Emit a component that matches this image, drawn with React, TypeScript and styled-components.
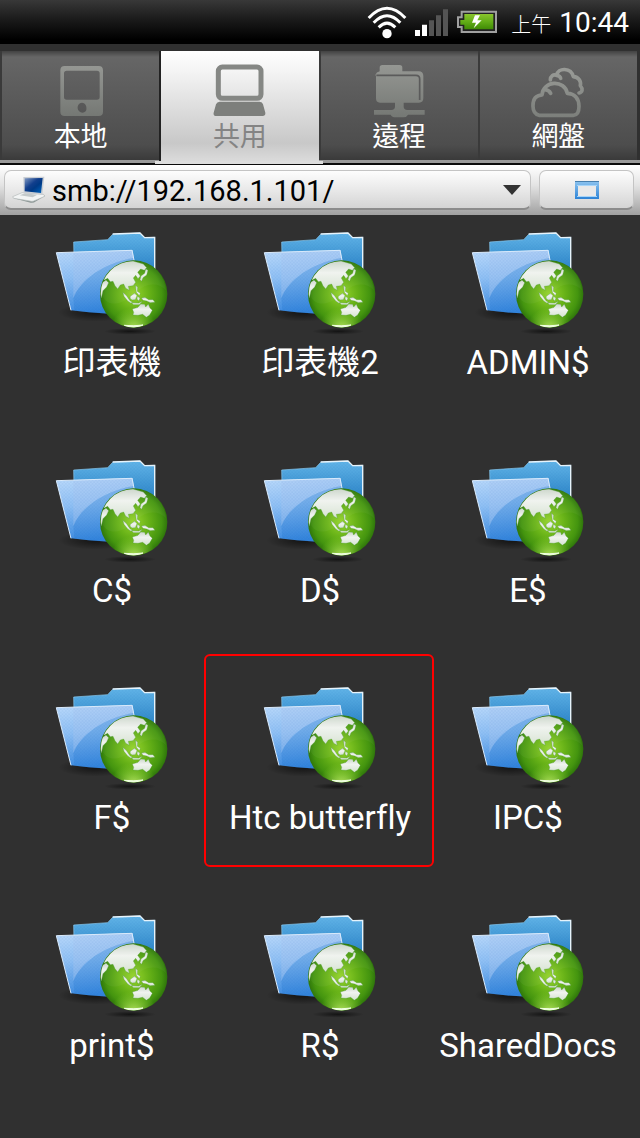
import React from "react";
import styled, { createGlobalStyle, css } from "styled-components";

const sans = `Roboto, "Noto Sans CJK TC", sans-serif`;

const GlobalStyle = createGlobalStyle`
  *, *::before, *::after { box-sizing: border-box; }
  body { margin: 0; background: #303030; font-family: ${sans}; font-variant-ligatures: none; }
  button, input { font: inherit; font-variant-ligatures: none; color: inherit; border: 0; padding: 0; margin: 0; background: none; }
  svg { display: block; flex: none; }
`;

const Screen = styled.div`
  display: flex;
  flex-direction: column;
  min-height: 100vh;
  background: #303030;
`;

const StatusBar = styled.header`
  display: flex;
  align-items: center;
  justify-content: flex-end;
  height: 44px;
  padding-right: 11px;
  color: #fff;
  background: linear-gradient(#383838, #1a1a1a 45%, #000 90%);
`;

const Clock = styled.time`
  display: flex;
  align-items: baseline;
  gap: 8px;
  margin-left: 14px;
  padding-top: 4px;
  font-size: 28px;
  line-height: 40px;
`;

const Meridiem = styled.span`
  font-size: 20px;
  font-weight: 300;
`;

const TabBar = styled.nav`
  display: flex;
  height: 121px;
  padding: 7px 3px 1px 0;
  background: linear-gradient(#303030 0 116px, #999 116px 119px, #0a0a0a 119px);
`;

const Tab = styled.button<{ $active: boolean }>`
  position: relative;
  flex: 1;
  display: flex;
  flex-direction: column;
  align-items: center;
  height: 109px;
  padding-top: 13px;
  border-left: 2px solid #3a3a3a;
  color: #fff;
  background: linear-gradient(#424242, #666 6px, #4d4d4d 94px, #3a3a3a);
  ${(p) =>
    p.$active &&
    css`
      height: 112px;
      color: #848484;
      background: linear-gradient(#fff, #f4f4f4 20px, #c8c8c8 92px, #ddd);
      border-left-color: #222;
      &::after {
        content: "";
        position: absolute;
        left: -6px;
        right: -4px;
        bottom: -1px;
        height: 3px;
        background: #ddd;
      }
    `}
`;

const TabLabel = styled.span`
  margin-top: 3px;
  font-size: 27px;
  line-height: 32px;
`;

const AddressBar = styled.form`
  display: flex;
  gap: 8px;
  padding: 5px 6px 5px 4px;
  background: linear-gradient(#fff, #e4e4e4 40%, #a0a0a0);
`;

const raised = css`
  height: 40px;
  border: 1px solid #c4c4c4;
  border-bottom: 2px solid #8c8c8c;
  border-radius: 7px;
  background: linear-gradient(#fdfdfd, #e9e9e9 50%, #d4d4d4);
`;

const AddressField = styled.div`
  ${raised}
  flex: 1;
  min-width: 0;
  display: flex;
  align-items: center;
  padding: 0 8px 0 7px;
  gap: 6px;
`;

const AddressInput = styled.input`
  flex: 1;
  min-width: 0;
  height: 36px;
  padding-top: 2px;
  font-size: 29px;
  color: #000;
  outline: none;
`;

const IconButton = styled.button`
  display: flex;
  align-items: center;
  justify-content: center;
`;

const WindowButton = styled(IconButton)`
  ${raised}
  flex: 0 0 95px;
`;

const FileGrid = styled.main`
  flex: 1;
  display: grid;
  grid-template-columns: repeat(3, 1fr);
  grid-auto-rows: 1fr;
  padding: 0 8px 13px;
`;

const FileItem = styled.button<{ $marked: boolean }>`
  position: relative;
  display: flex;
  flex-direction: column;
  align-items: center;
  min-height: 200px;
  padding-top: 13px;
  color: #fff;
  ${(p) =>
    p.$marked &&
    css`
      &::after {
        content: "";
        position: absolute;
        inset: -16px -10px 31px -12px;
        border: 2px solid #f00;
        border-radius: 6px;
      }
    `}
`;

const FileName = styled.span`
  font-size: 33px;
  line-height: 50px;
  white-space: nowrap;
`;

function WifiIcon() {
  return (
    <svg width="40" height="34" viewBox="0 0 120 102" fill="none" stroke="#fff" strokeWidth="9">
      <path d="M5 39Q60-19 115 39M20 53Q60 11 100 53M35 67Q60 42 85 67" />
      <circle cx="60" cy="86" r="14" fill="#fff" stroke="none" />
    </svg>
  );
}

function SignalIcon() {
  return (
    <svg width="34" height="28" viewBox="0 0 102 84" style={{ marginLeft: 8 }}>
      <path d="M0 66h15v18H0zM21 50h15v34H21z" fill="#fff" />
      <path d="M42 37h15v47H42zM63 22h15v62H63zM84 4h15v80H84z" fill="#555" />
    </svg>
  );
}

function BatteryIcon() {
  return (
    <svg width="40" height="24" viewBox="0 0 120 72" style={{ marginLeft: 8 }}>
      <defs>
        <linearGradient id="battery" x2="0" y2="1">
          <stop stopColor="#8ac52c" />
          <stop offset=".5" stopColor="#62ad17" />
          <stop offset="1" stopColor="#3f8a05" />
        </linearGradient>
      </defs>
      <path d="M14 5H117V66H14V51H3V22H14Z" fill="#222" stroke="#a0a0a0" strokeWidth="6" />
      <path d="M22 12H109V58H22V44H10V30H22Z" fill="url(#battery)" />
      <path d="M54 16H69L61 31H74L50 55L57 38H45Z" fill="#fff" />
    </svg>
  );
}

function DeviceIcon() {
  return (
    <svg width="54" height="54" viewBox="0 0 162 162">
      <path
        fillRule="evenodd"
        fill="url(#tabGray)"
        d="M29 6H134Q147 6 147 19V143Q147 156 134 156H32Q19 156 19 143V19Q19 6 32 6ZM38 20Q30 20 30 28V99Q30 107 38 107H129Q137 107 137 99V28Q137 20 129 20ZM84 116C71 117 67 132 75 141C82 149 93 147 97 138C99 127 95 117 84 116Z"
      />
    </svg>
  );
}

function LaptopIcon() {
  return (
    <svg width="54" height="54" viewBox="0 0 162 162">
      <rect x="16" y="9" width="128" height="94" rx="12" fill="none" stroke="#858784" strokeWidth="15" />
      <path fill="#7d7f7c" d="M20 113H140Q148 113 150 121L157 146Q158 156 149 156H10Q0 156 2 146L9 121Q12 113 20 113Z" />
    </svg>
  );
}

function RemoteIcon() {
  return (
    <svg width="54" height="54" viewBox="0 0 162 162" fill="url(#tabGray)">
      <path d="M10 33Q13 24 23 22V11Q23 3 31 3H83Q91 3 91 11V22H140Q154 22 154 36V102Q154 116 141 116H95V128Q95 136 106 138H158V152H108Q104 160 94 160H71Q60 160 56 152H6V138H58Q69 136 69 128V116H24Q12 116 12 103V36Z" />
      <path d="M13 34H132Q143 34 143 45V108" fill="none" stroke="#5b5b5b" strokeWidth="5" />
    </svg>
  );
}

function CloudIcon() {
  return (
    <svg width="54" height="54" viewBox="0 0 162 162" fill="none" stroke="url(#cloudGray)" strokeWidth="11" strokeLinecap="round" strokeLinejoin="round">
      <path d="M58 48C58 36 67 30 77 34C81 10 120 10 127 38C143 39 151 51 148 65C157 76 154 85 144 87M77 34C83 35 88 39 89 43" />
      <path d="M24 154Q6 149 6 127Q5 94 33 93C36 49 101 46 109 88C131 89 144 103 144 127Q144 154 127 154Z" />
      <path d="M42 77Q54 78 59 88" />
    </svg>
  );
}

function ComputerIcon() {
  return (
    <svg width="34" height="30" viewBox="0 0 102 90">
      <defs>
        <linearGradient id="screen" x2="1" y2="1">
          <stop stopColor="#8199c2" />
          <stop offset=".4" stopColor="#123f8d" />
          <stop offset=".6" stopColor="#003985" />
          <stop offset="1" stopColor="#0066c0" />
        </linearGradient>
      </defs>
      <path d="M5 70L56 83Q64 85 72 79L99 63L92 57L30 55Z" fill="#8b9694" />
      <path d="M2 65L30 53L94 58Q99 60 96 65L65 78Q60 80 54 78L5 70Z" fill="#f2f4f4" stroke="#b5bbbb" strokeWidth="2" />
      <path d="M23 61L39 55L76 59L62 67Z" fill="#c3c9ca" />
      <path d="M34 6L97 5L91 59L35 53Z" fill="#c9ced4" />
      <path d="M38 10L92 9L87 54L38 49Z" fill="url(#screen)" />
    </svg>
  );
}

function WindowIcon() {
  return (
    <svg width="24" height="18" viewBox="0 0 24 18">
      <defs>
        <linearGradient id="frame" x2="0" y2="1">
          <stop stopColor="#8dc4f0" />
          <stop offset="1" stopColor="#2d83d6" />
        </linearGradient>
      </defs>
      <path d="M0 0H24V18H0Z" fill="url(#frame)" />
      <path d="M0 0H24V1H0Z" fill="#477fae" />
      <path d="M3 5H21V15H3Z" fill="#e9e9e9" />
      <path d="M2 4H22V5H2ZM2 15H22V16H2Z" fill="#a8d5f8" />
    </svg>
  );
}

function SharedDefs() {
  return (
    <svg width="0" height="0" style={{ position: "absolute" }} aria-hidden="true">
      <defs>
        <linearGradient id="tabGray" x2="0" y2="1">
          <stop stopColor="#959793" />
          <stop offset="1" stopColor="#757874" />
        </linearGradient>
        <linearGradient id="cloudGray" gradientUnits="userSpaceOnUse" x1="0" y1="0" x2="0" y2="162">
          <stop stopColor="#9b9d99" />
          <stop offset="1" stopColor="#7c7f7b" />
        </linearGradient>
        <linearGradient id="folderBack" x2="0" y2="1">
          <stop stopColor="#62b5e8" />
          <stop offset=".5" stopColor="#2f87c9" />
          <stop offset="1" stopColor="#1c69b4" />
        </linearGradient>
        <linearGradient id="folderFront" x2=".15" y2="1">
          <stop stopColor="#bcdafb" />
          <stop offset=".45" stopColor="#8fc0f4" />
          <stop offset="1" stopColor="#3a8ae0" />
        </linearGradient>
        <linearGradient id="folderSheen" x2="0" y2="1">
          <stop stopColor="#2b7ed0" stopOpacity=".3" />
          <stop offset="1" stopColor="#1d72cf" stopOpacity=".25" />
        </linearGradient>
        <radialGradient id="globe" cx=".5" cy=".5" r=".52">
          <stop stopColor="#96d42c" />
          <stop offset=".45" stopColor="#66b117" />
          <stop offset=".8" stopColor="#44950f" />
          <stop offset="1" stopColor="#2a6f0a" />
        </radialGradient>
        <radialGradient id="globeGlow" cx=".5" cy="1.05" r=".35">
          <stop stopColor="#c8f270" />
          <stop offset="1" stopColor="#8fd32c" stopOpacity="0" />
        </radialGradient>
        <linearGradient id="land" x2="0" y2="1">
          <stop stopColor="#ccd6cb" />
          <stop offset=".4" stopColor="#f0f3ef" />
          <stop offset="1" stopColor="#d5e3d0" />
        </linearGradient>
        <radialGradient id="shade">
          <stop stopColor="#000" stopOpacity=".6" />
          <stop offset="1" stopColor="#000" stopOpacity="0" />
        </radialGradient>
        <pattern id="dots" width="10" height="10" patternUnits="userSpaceOnUse">
          <path d="M0 0h5v5H0zM5 5h5v5H5z" fill="#0c5aa8" fillOpacity=".06" />
        </pattern>
        <clipPath id="globeClip">
          <circle cx="281" cy="222" r="99" />
        </clipPath>
        <symbol id="networkFolder" viewBox="24 24 384 330">
          <ellipse cx="165" cy="277" rx="110" ry="28" fill="url(#shade)" />
          <ellipse cx="270" cy="334" rx="78" ry="10" fill="url(#shade)" />
          <path d="M101 66L203 59L218 43L300 39L314 53L344 52V240L105 250Z" fill="url(#folderBack)" stroke="#8acaf0" strokeWidth="2" />
          <path d="M101 66L203 59L218 43L300 39L314 53L344 52V240L105 250Z" fill="url(#dots)" />
          <path d="M218 42L300 39L314 53L344 52V160" fill="none" stroke="#e6f3fb" strokeWidth="4" />
          <path d="M49 98L278 90L303 284Q200 284 93 271Z" fill="url(#folderFront)" />
          <path d="M100 96L278 91V118C190 128 120 180 100 235Z" fill="#a8c6ef" fillOpacity=".4" />
          <path d="M100 235C120 180 190 128 283 113L303 284Q200 284 103 272Z" fill="url(#folderSheen)" />
          <path d="M49 98L278 90L303 284Q200 284 93 271Z" fill="url(#dots)" />
          <path d="M93 271L49 98L276 91L283 125" fill="none" stroke="#d9eafb" strokeWidth="3" />
          <circle cx="281" cy="222" r="101" fill="url(#globe)" />
          <circle cx="281" cy="222" r="100" fill="url(#globeGlow)" />
          <g clipPath="url(#globeClip)" fill="url(#land)" stroke="#4c9a3a" strokeWidth="1" strokeLinejoin="round">
            <path d="M201 158C222 132 250 122 279 123L310 132L320 143L313 151L302 147L293 157L301 168L294 176L287 166L280 174L287 187L279 197L265 199L268 211L257 205L251 192L241 195L233 207L225 197L219 184L211 185L203 175L193 180L188 174Z" />
            <path d="M184 190L198 180L206 188L200 201L189 212L184 234L179 220Z" />
            <path d="M303 168L314 160L317 146L324 151L320 165L309 173L305 184L300 179Z" />
            <path d="M248 217L258 225L270 242L278 247L273 250L263 243L252 229Z" />
            <path d="M271 229L284 219L291 227L286 239L276 240L270 235Z" />
            <path d="M286 195L293 202L292 214L301 220L298 227L289 217ZM292 229L300 234L297 243L291 238ZM275 248L296 249L308 244L298 254L280 254Z" />
            <path d="M304 234L315 232L326 239L339 239L345 247L331 248L320 243L309 241Z" />
            <path d="M277 267L294 262L302 252L314 253L317 261L325 252L330 264L337 271L329 285L319 292L308 283L294 286L279 285L281 277Z" />
          </g>
          <path d="M253 316Q281 326 309 315Q282 319 253 316Z" fill="#efffe0" stroke="#efffe0" strokeWidth="3" />
          <path d="M184 218C192 255 236 266 281 222C317 188 353 185 378 211C365 99 218 90 184 218Z" fill="#fff" fillOpacity=".04" />
        </symbol>
      </defs>
    </svg>
  );
}

const tabs = [
  { label: "本地", Icon: DeviceIcon },
  { label: "共用", Icon: LaptopIcon },
  { label: "遠程", Icon: RemoteIcon },
  { label: "網盤", Icon: CloudIcon },
];

const files = [
  "印表機", "印表機2", "ADMIN$",
  "C$", "D$", "E$",
  "F$", "Htc butterfly", "IPC$",
  "print$", "R$", "SharedDocs",
];

export default function App() {
  const [active, setActive] = React.useState("共用");
  const [address, setAddress] = React.useState("smb://192.168.1.101/");
  return (
    <Screen>
      <GlobalStyle />
      <SharedDefs />
      <StatusBar>
        <WifiIcon />
        <SignalIcon />
        <BatteryIcon />
        <Clock>
          <Meridiem>上午</Meridiem>
          <span>10:44</span>
        </Clock>
      </StatusBar>
      <TabBar>
        {tabs.map(({ label, Icon }) => (
          <Tab key={label} type="button" $active={label === active} onClick={() => setActive(label)}>
            <Icon />
            <TabLabel>{label}</TabLabel>
          </Tab>
        ))}
      </TabBar>
      <AddressBar onSubmit={(e) => e.preventDefault()}>
        <AddressField>
          <ComputerIcon />
          <AddressInput aria-label="Address" value={address} onChange={(e) => setAddress(e.target.value)} />
          <IconButton type="button" aria-label="Recent addresses">
            <svg width="20" height="12" viewBox="0 0 20 12">
              <path d="M1 1H19L10 11Z" fill="#333" />
            </svg>
          </IconButton>
        </AddressField>
        <WindowButton type="button" aria-label="Windows">
          <WindowIcon />
        </WindowButton>
      </AddressBar>
      <FileGrid>
        {files.map((name) => (
          <FileItem key={name} type="button" $marked={name === "Htc butterfly"}>
            <svg width="128" height="110" aria-hidden="true">
              <use href="#networkFolder" />
            </svg>
            <FileName>{name}</FileName>
          </FileItem>
        ))}
      </FileGrid>
    </Screen>
  );
}
